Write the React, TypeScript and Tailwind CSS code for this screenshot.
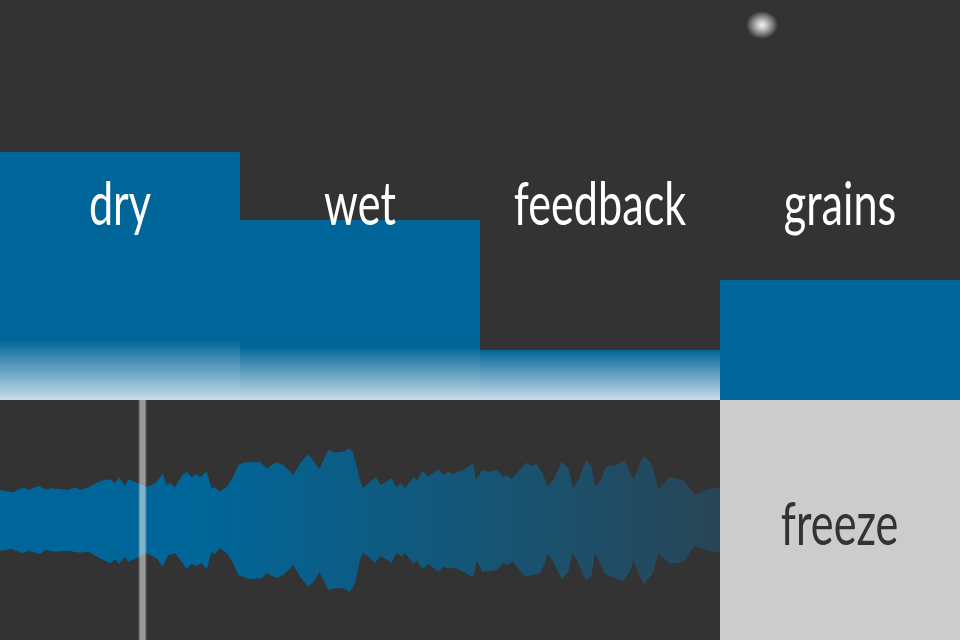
import React from 'react';

const sliders = [
  { label: 'dry', fill: 248, fade: 60 },
  { label: 'wet', fill: 180, fade: 53 },
  { label: 'feedback', fill: 50, fade: 50 },
  { label: 'grains', fill: 120, fade: 0 },
];

// traced from the recording, 3 units per pixel
const top =
  '0,270 40,277 70,262 85,270 115,258 130,265 145,270 150,265 175,267 205,270 225,262 240,270 265,262 300,243 330,238 345,250 358,232 375,258 385,238 415,250 440,262 465,250 488,222 500,255 512,250 525,262 545,228 560,215 575,232 590,222 600,232 620,215 635,265 645,262 660,275 680,260 700,230 715,195 735,187 780,187 800,205 830,187 850,195 880,225 900,190 925,163 945,190 958,207 985,150 1005,158 1030,155 1048,145 1060,160 1080,240 ' +
  '1088,265 1105,250 1128,232 1142,255 1175,235 1190,262 1202,248 1215,265 1240,232 1252,240 1267,212 1285,230 1315,208 1330,225 1345,215 1360,222 1390,210 1420,190 1428,240 1445,210 1470,215 1490,210 1510,232 1520,225 1535,238 1550,220 1580,188 1595,198 1610,192 1630,225 1642,258 1660,240 1685,185 1705,205 1720,265 1735,240 1758,180 1775,200 1785,262 1800,245 1820,198 1850,195 1875,180 1900,240 1930,168 1955,190 1975,268 2010,230 2050,240 2085,285 2120,268 2160,262';
const bottom =
  '2160,458 2120,450 2085,437 2050,485 2010,492 1975,458 1960,520 1930,553 1900,480 1890,515 1870,543 1815,522 1785,460 1775,525 1758,542 1735,490 1717,458 1705,515 1685,538 1660,485 1642,462 1635,490 1620,520 1600,525 1575,530 1538,485 1520,495 1510,488 1490,510 1447,515 1430,482 1420,532 1370,505 1345,505 1330,500 1315,515 1285,492 1267,508 1252,482 1240,490 1215,460 1205,470 1190,458 1175,488 1142,468 1125,488 1090,458 ' +
  '1080,480 1065,550 1050,577 1030,565 1005,565 985,570 958,515 945,540 925,560 900,530 880,495 850,525 830,535 800,520 785,535 750,537 715,525 700,490 680,460 660,445 645,462 635,455 620,508 605,490 590,498 575,492 560,508 545,485 525,460 505,465 488,500 470,475 440,460 415,472 385,485 375,470 358,492 345,478 330,490 300,475 265,455 240,458 205,452 165,455 135,450 120,462 85,452 70,460 35,447 0,452';

export default function App() {
  return (
    <div className="relative h-[640px] w-[960px] overflow-hidden bg-[#333333] font-['Lato',sans-serif] font-normal">
      {/* touch indicator */}
      <div className="absolute left-[746px] top-[11px] h-[28px] w-[32px] rounded-full bg-[radial-gradient(closest-side,#f2f2f2_0%,#c4c4c4_30%,#777777_68%,#333333_100%)]" />

      <div className="grid h-[400px] grid-cols-4">
        {sliders.map((s) => (
          <div key={s.label} className="relative flex flex-col justify-end">
            <div className="flex flex-col justify-end bg-[#006699]" style={{ height: s.fill }}>
              {s.fade > 0 && (
                <div className="w-full bg-[linear-gradient(to_bottom,#006699,#c8dde9)]" style={{ height: s.fade }} />
              )}
            </div>
            <span className="absolute left-0 right-0 top-[170px] scale-x-[0.72] text-center text-[60px] leading-[64px] text-white">
              {s.label}
            </span>
          </div>
        ))}
      </div>

      <div className="flex h-[240px]">
        <div className="relative w-[720px]">
          <svg viewBox="0 0 2160 720" className="block h-[240px] w-[720px] blur-[0.6px]">
            <defs>
              <linearGradient id="wave" x1="0" y1="0" x2="1" y2="0">
                <stop offset="0.28" stopColor="#006699" />
                <stop offset="1" stopColor="#284657" />
              </linearGradient>
            </defs>
            <polygon points={`${top} ${bottom}`} fill="url(#wave)" />
          </svg>
          <div className="absolute bottom-0 left-[138px] top-0 w-[9px] bg-[linear-gradient(to_right,transparent,rgba(255,255,255,0.5)_25%,rgba(255,255,255,0.5)_75%,transparent)]" />
        </div>
        <div className="flex w-[240px] items-center justify-center bg-[#cccccc] pb-[2px] pt-[6px] text-[#333333]">
          <span className="scale-x-[0.72] text-[60px] leading-[64px]">freeze</span>
        </div>
      </div>
    </div>
  );
}
